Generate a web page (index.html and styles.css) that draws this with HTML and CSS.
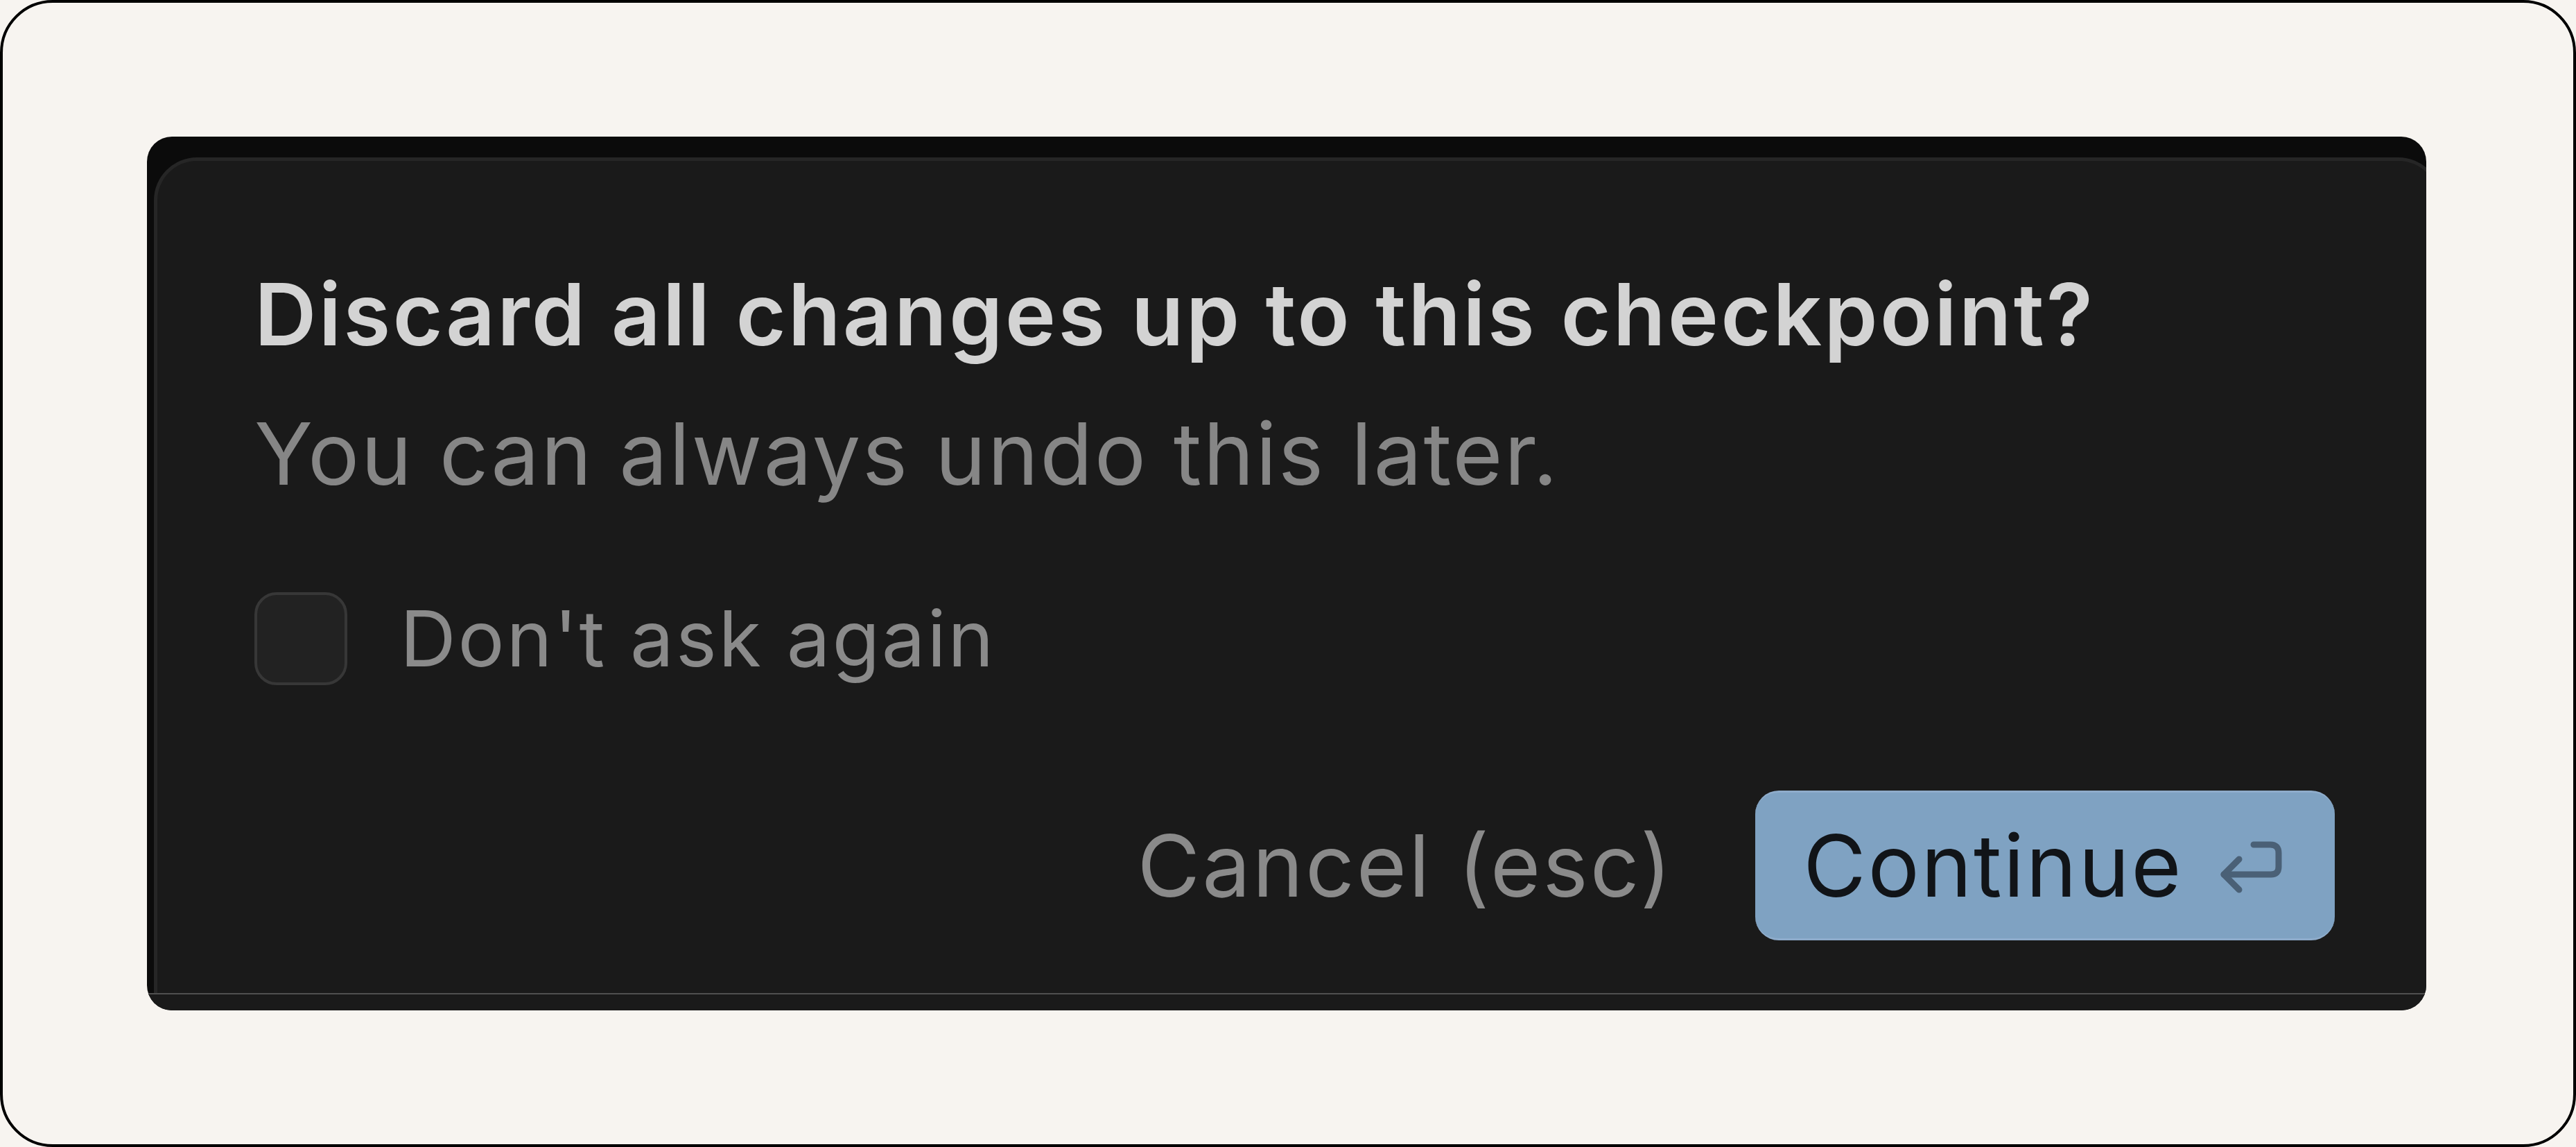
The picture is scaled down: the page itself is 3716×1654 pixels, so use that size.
FILE: index.html
```html
<!DOCTYPE html>
<html>
<head>
<meta charset="utf-8">
<link rel="stylesheet" href="styles.css">
</head>
<body>
<div class="frame">
  <div class="panel">
    <div class="card">
      <h1 class="title">Discard all changes up to this checkpoint?</h1>
      <p class="subtitle">You can always undo this later.</p>
      <label class="check-row">
        <span class="checkbox"></span>
        <span class="check-label">Don't ask again</span>
      </label>
      <div class="actions">
        <span class="cancel">Cancel (esc)</span>
        <span class="continue">
          <span class="continue-text">Continue</span>
          <svg class="enter-icon" viewBox="0 0 100 90" width="100" height="90" aria-hidden="true">
            <path d="M52 15 H76 Q88 15 88 27 V47 Q88 58 77 58 H9" fill="none" stroke="currentColor" stroke-width="9" stroke-linecap="round" stroke-linejoin="round"/>
            <path d="M31 36 L9 58 L31 80" fill="none" stroke="currentColor" stroke-width="9" stroke-linecap="round" stroke-linejoin="round"/>
          </svg>
        </span>
      </div>
    </div>
    <div class="footer-strip"></div>
  </div>
</div>
</body>
</html>
```
FILE: styles.css
```css
* { box-sizing: border-box; }
html, body { margin: 0; padding: 0; background: #f7f4f0; }
.frame {
  width: 3716px;
  height: 1654px;
  border: 4px solid #000;
  border-radius: 76px;
  background: #f7f4f0;
  padding: 193px 0 0 208px;
  overflow: hidden;
}
.panel {
  width: 3288px;
  height: 1260px;
  border-radius: 36px;
  background: #0b0b0b;
  overflow: hidden;
  display: flex;
  flex-direction: column;
  padding-top: 30px;
  padding-left: 10px;
}
.card {
  width: 3300px;
  height: 1205px;
  flex: none;
  background: #1a1a1a;
  border: 5px solid #262626;
  border-bottom: none;
  border-radius: 62px 62px 0 0;
  padding: 146px 149px 0 140px;
  display: flex;
  flex-direction: column;
  font-family: Inter, "Noto Sans", sans-serif;
}
.footer-strip {
  flex: none;
  height: 25px;
  margin-left: -10px;
  background: #1a1a1a;
  border-top: 2px solid #4f4f4f;
}
.title {
  margin: 0;
  font-size: 124px;
  line-height: 150px;
  font-weight: 600;
  letter-spacing: 3.1px;
  color: #d3d3d3;
}
.subtitle {
  margin: 51px 0 0;
  font-size: 124px;
  line-height: 150px;
  font-weight: 400;
  letter-spacing: 2.4px;
  color: #868686;
}
.check-row {
  margin-top: 124px;
  display: flex;
  align-items: center;
  height: 135px;
  gap: 76px;
}
.checkbox {
  width: 134px;
  height: 134px;
  flex: none;
  border-radius: 32px;
  border: 4px solid #373737;
  background: #222222;
}
.check-label {
  font-size: 112px;
  line-height: 135px;
  letter-spacing: 2.7px;
  color: #8a8a8a;
}
.actions {
  margin-top: 152px;
  display: flex;
  justify-content: flex-end;
  align-items: center;
  gap: 118px;
}
.cancel {
  font-size: 124px;
  line-height: 150px;
  letter-spacing: 3px;
  color: #8a8a8a;
}
.continue {
  height: 216px;
  display: flex;
  align-items: center;
  gap: 50px;
  padding: 0 69px 0 69px;
  background: #7fa2c2;
  border-radius: 34px;
  border-top: 3px solid #8eaccb;
  border-bottom: 3px solid #8eaccb;
}
.continue-text {
  font-size: 124px;
  line-height: 150px;
  letter-spacing: 2.5px;
  color: #111418;
}
.enter-icon {
  color: #4a6076;
  flex: none;
}
```
